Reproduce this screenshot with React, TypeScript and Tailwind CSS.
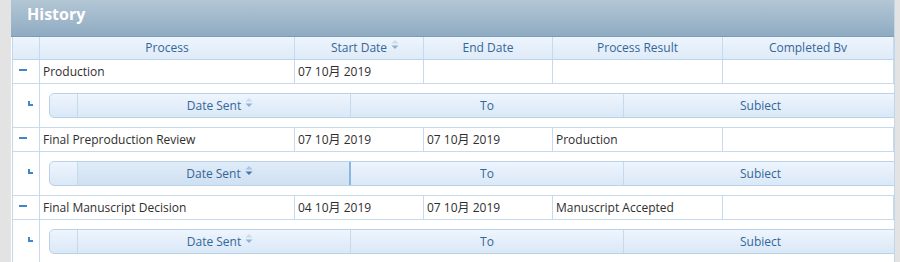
import React from 'react';

const font = { fontFamily: '"Open Sans", "Noto Sans CJK SC", sans-serif' };

const SortArrow = ({ dark }: { dark?: boolean }) => (
  <svg width="8" height="10" viewBox="0 0 8 10" className="absolute left-full top-[1px] ml-[4px]">
    <path d="M4 0 L7.5 3.5 L0.5 3.5 Z" fill={dark ? '#a9c4df' : '#c9dbec'} />
    <path d="M0.5 5.5 L7.5 5.5 L4 9 Z" fill={dark ? '#3f79b5' : '#8db2d6'} />
  </svg>
);

const Minus = () => <div className="w-[8px] h-[2px] bg-[#3f86cc] mt-[-4px]" />;

const Corner = () => <div className="w-[5px] h-[5px] border-l-2 border-b-2 border-[#3f86cc] mt-[-4px]" />;

const cols = [
  { label: 'Process', w: 'w-[255px]' },
  { label: 'Start Date', w: 'w-[129px]', sort: true },
  { label: 'End Date', w: 'w-[129px]' },
  { label: 'Process Result', w: 'w-[170px]' },
  { label: 'Completed Bv', w: 'w-[171px]' },
];

const rows = [
  ['Production', '07 10月 2019', '', '', ''],
  ['Final Preproduction Review', '07 10月 2019', '07 10月 2019', 'Production', ''],
  ['Final Manuscript Decision', '04 10月 2019', '07 10月 2019', 'Manuscript Accepted', ''],
];

const NestedHeader = ({ sorted }: { sorted?: boolean }) => (
  <div className="flex h-[25px] w-[860px] shrink-0 rounded-l-[5px] border border-[#b9d2ea] bg-gradient-to-b from-[#eef5fd] to-[#dae8f7] text-[12px] text-[#346699]">
    <div className="w-[28px] shrink-0 border-r border-[#c6daee]" />
    <div
      className={`w-[273px] shrink-0 flex items-center justify-center ${
        sorted ? 'bg-gradient-to-b from-[#e0ecf8] to-[#cfe0f2] border-r-2 border-[#8ab6e2]' : 'border-r border-[#c6daee]'
      }`}
    >
      <span className="relative">
        Date Sent
        <SortArrow dark={sorted} />
      </span>
    </div>
    <div className="w-[273px] shrink-0 flex items-center justify-center border-r border-[#c6daee]">To</div>
    <div className="w-[273px] shrink-0 flex items-center justify-center">Subiect</div>
  </div>
);

export default function App() {
  return (
    <div className="w-[900px] h-[262px] bg-[#e3e3e3] pl-[11px] overflow-hidden" style={font}>
      <div className="w-[884px] h-[262px] bg-white overflow-hidden border-r border-[#c3d7ea]">
        <div className="h-[37px] bg-gradient-to-b from-[#b3c7d5] to-[#8fabc2] border-b border-[#7f9db5] flex items-center pl-[16px] pb-[9px]">
          <span className="text-white font-bold text-[16px]">History</span>
        </div>
        <div className="ml-[1px] border-l border-[#c3d7ea]">
          <div className="flex h-[23px] bg-gradient-to-b from-[#edf5fd] to-[#dfebf8] border-b border-[#bcd3ea] text-[12px] text-[#346699]">
            <div className="w-[27px] shrink-0 border-r border-[#c6daee]" />
            {cols.map((c) => (
              <div
                key={c.label}
                className={`${c.w} shrink-0 flex items-center justify-center border-r border-[#c6daee]`}
              >
                <span className="relative">
                  {c.label}
                  {c.sort && <SortArrow />}
                </span>
              </div>
            ))}
          </div>
          {rows.map((r, i) => (
            <React.Fragment key={i}>
              <div className="flex h-[24px] border-b border-[#c6daee] text-[12px] text-[#2e2e2e]">
                <div className="w-[27px] shrink-0 flex items-center pl-[6px] border-r border-[#c6daee]">
                  <Minus />
                </div>
                {r.map((v, j) => (
                  <div
                    key={j}
                    className={`${cols[j].w} shrink-0 flex items-center px-[3px] border-r border-[#c6daee] whitespace-nowrap`}
                  >
                    {v}
                  </div>
                ))}
              </div>
              <div className="flex h-[44px] border-b border-[#c6daee]">
                <div className="w-[27px] shrink-0 flex items-center pl-[15px] border-r border-[#c6daee]">
                  <Corner />
                </div>
                <div className="pl-[9px] pt-[9px]">
                  <NestedHeader sorted={i === 1} />
                </div>
              </div>
            </React.Fragment>
          ))}
        </div>
      </div>
    </div>
  );
}
